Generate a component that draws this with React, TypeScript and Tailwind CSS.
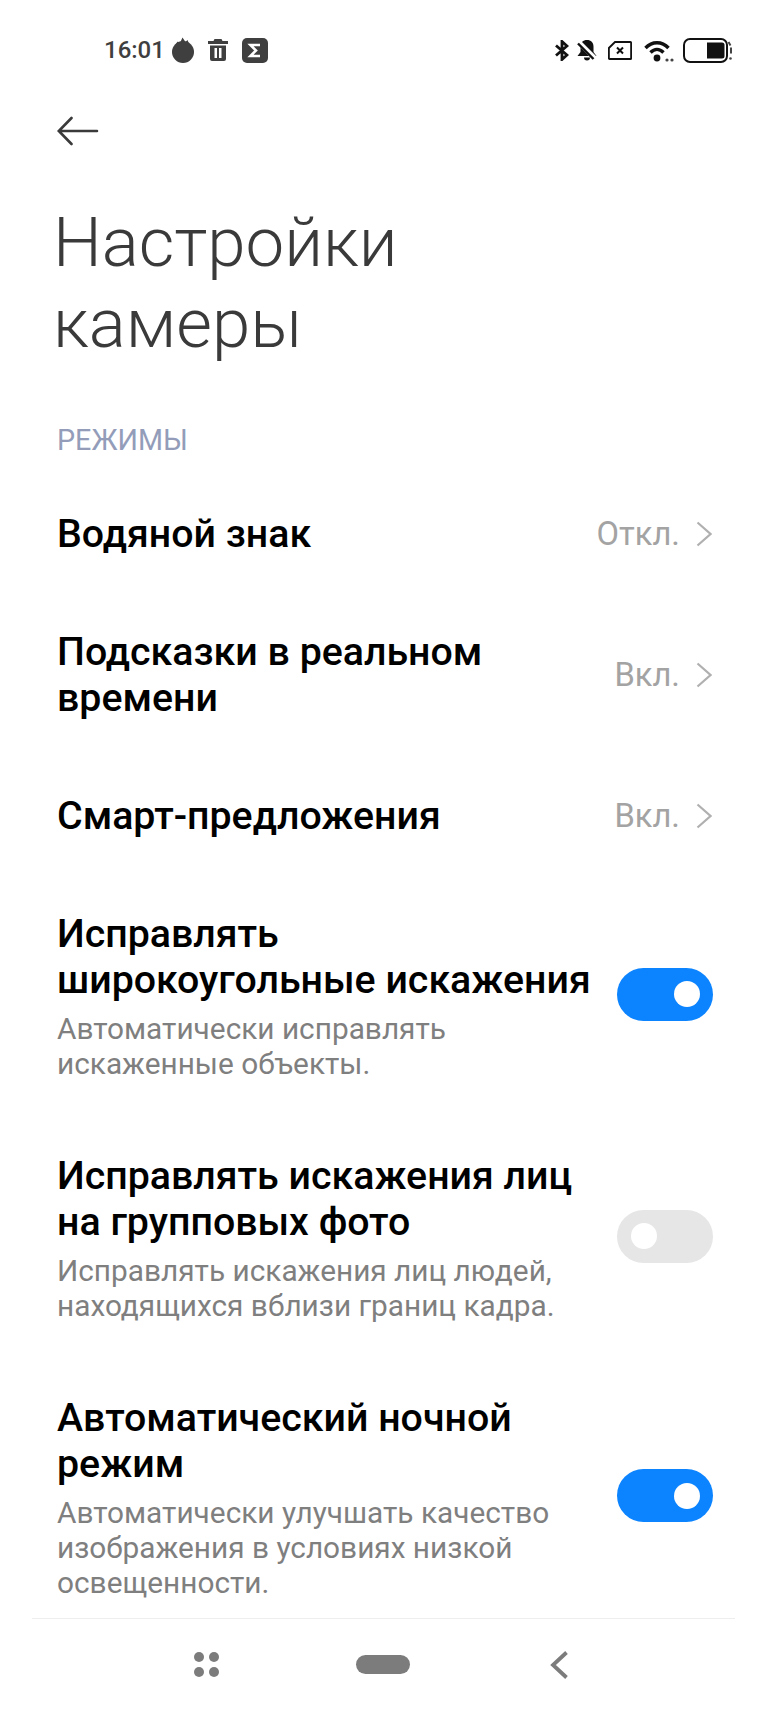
import React from "react";

const Fire = () => (
  <svg width="22" height="26" viewBox="0 0 22 26" fill="#3f3f3f">
    <circle cx="11" cy="15" r="11" />
    <path d="M3 9 5.500 4.500 7.500 7 10.500 .5 13.500 5 15.500 3 18 9Z" />
  </svg>
);

const Trash = () => (
  <svg width="20" height="22" viewBox="0 0 20 22">
    <path fill="#3f3f3f" d="M6.500 0h7l1 2H20v3H0V2h5.500ZM2 6.500h16V20a2 2 0 0 1-2 2H4a2 2 0 0 1-2-2Z" />
    <rect x="6.500" y="9" width="2.500" height="10" fill="#fff" />
    <rect x="11" y="9" width="2.500" height="10" fill="#fff" />
  </svg>
);

const SigmaBadge = () => (
  <svg width="26" height="25" viewBox="0 0 26 25">
    <rect width="26" height="25" rx="5" fill="#3f3f3f" />
    <path d="M18 7H8.500L14 12.500 8.500 18H18" fill="none" stroke="#fff" strokeWidth="2.600" />
  </svg>
);

const Bluetooth = () => (
  <svg width="14" height="21" viewBox="0 0 14 21" fill="none" stroke="#111" strokeWidth="2.800">
    <path d="M1 5.500 12 15 7 19.500V1.500L12 6 1 15.500" />
  </svg>
);

const MutedBell = () => (
  <svg width="20" height="21" viewBox="0 0 20 21">
    <path fill="#111" d="M10 0c4 0 6.500 2.500 6.500 6.500V12l3 4H.5l3-4V6.500C3.500 2.500 6 0 10 0ZM7 17.500h6a3 3 0 0 1-6 0Z" />
    <path d="M1 1.500 18.500 19" stroke="#fff" strokeWidth="5" />
    <path d="M1 3.500 16.500 19" stroke="#111" strokeWidth="2.400" />
  </svg>
);

const NoSim = () => (
  <svg width="24" height="19" viewBox="0 0 24 19" fill="none" stroke="#111">
    <path strokeWidth="1.800" d="M7 1h15.500a.6.6 0 0 1 .6.6v15.800a.6.6 0 0 1-.6.6H1.500a.6.6 0 0 1-.6-.6V7Z" />
    <path strokeWidth="2" d="m9 6.500 6 6M15 6.500l-6 6" />
  </svg>
);

const Wifi = () => (
  <svg width="30" height="23" viewBox="0 0 30 23" fill="none" stroke="#111" strokeWidth="3.400">
    <path d="M1.500 9C8 2 18 2 24.500 9" />
    <path d="M6.500 13.500c4-4 9-4 13 0" />
    <circle cx="13" cy="19" r="3.400" fill="#111" stroke="none" />
    <circle cx="23" cy="21" r="1.600" fill="#444" stroke="none" />
    <circle cx="28" cy="21" r="1.600" fill="#444" stroke="none" />
  </svg>
);

const Battery = () => (
  <svg width="50" height="25" viewBox="0 0 50 25" fill="none">
    <rect x="1" y="1" width="43" height="23" rx="6" stroke="#111" strokeWidth="2" />
    <path fill="#111" d="M24 4.500h15a2.500 2.500 0 0 1 2.500 2.500v11a2.500 2.500 0 0 1-2.500 2.500H24Z" />
    <path stroke="#444" strokeWidth="2" d="m45.500 4 2 3.500M48 9.500v6" />
    <circle cx="47.500" cy="20.500" r="1.300" fill="#444" />
  </svg>
);

const Chevron = () => (
  <svg width="16" height="26" viewBox="0 0 16 26" fill="none" stroke="#b0b0b0" strokeWidth="2.200">
    <path d="m1.500 1.500 13 11.500-13 11.500" />
  </svg>
);

function Toggle({ on }: { on: boolean }) {
  return (
    <div
      className={
        on
          ? "flex h-[53px] w-[96px] shrink-0 items-center justify-end rounded-full bg-[#0d84ff] pr-[13px] mb-1"
          : "flex h-[53px] w-[96px] shrink-0 items-center justify-start rounded-full bg-[#e6e6e6] pl-[14px] mb-1"
      }
    >
      <div className="h-[26px] w-[26px] rounded-full bg-white" />
    </div>
  );
}

function ValueRow({ title, value }: { title: React.ReactNode; value: string }) {
  return (
    <div className="flex items-center justify-between py-9">
      <div className="text-[39.3px] leading-[46px] font-medium text-black">{title}</div>
      <div className="flex items-center gap-[16px] pr-[1px]">
        <span className="text-[32.700px] leading-[46px] text-[#a3a3a3]">{value}</span>
        <Chevron />
      </div>
    </div>
  );
}

function ToggleRow({ title, hint, on }: { title: React.ReactNode; hint: React.ReactNode; on: boolean }) {
  return (
    <div className="flex items-center justify-between py-9">
      <div className="w-[540px] shrink-0">
        <div className="text-[39.3px] leading-[46px] font-medium text-black">{title}</div>
        <div className="mt-2 text-[29.800px] leading-[35px] text-[#7f7f7f]">{hint}</div>
      </div>
      <Toggle on={on} />
    </div>
  );
}

export default function App() {
  return (
    <div className="flex h-[1711px] w-[770px] flex-col overflow-hidden bg-white font-['Roboto',sans-serif]">
      {/* status bar */}
      <div className="flex h-[100px] shrink-0 items-center justify-between pr-[37px] pl-[104px]">
        <div className="flex items-center">
          <span className="text-[24px] font-medium text-[#3f3f3f]">16:01</span>
          <div className="ml-[7px] flex items-center gap-[14px]">
            <Fire />
            <Trash />
            <SigmaBadge />
          </div>
        </div>
        <div className="flex items-center">
          <Bluetooth />
          <div className="ml-[8px]"><MutedBell /></div>
          <div className="ml-[11px]"><NoSim /></div>
          <div className="ml-[12px]"><Wifi /></div>
          <div className="ml-[9px]"><Battery /></div>
        </div>
      </div>

      {/* scrolling settings list */}
      <div className="min-h-0 flex-1 overflow-hidden px-[57px]">
        <svg width="42" height="30" viewBox="0 0 42 30" fill="none" stroke="#3a3a3a" strokeWidth="2.600" strokeLinecap="round" className="mt-[16px]">
          <path d="M40 15H2M14.500 2 1.800 15l12.700 13" />
        </svg>
        <h1 className="mt-[56px] -ml-[4px] text-[69px] leading-[81px] font-light text-[#3a3a3a]">
          Настройки
          <br />
          камеры
        </h1>
        <div className="mt-[60px] text-[28.700px] leading-[32px] text-[#939db9]">РЕЖИМЫ</div>
        <div className="mt-[19px]">
          <ValueRow title="Водяной знак" value="Откл." />
          <ValueRow title={<>Подсказки в реальном<br />времени</>} value="Вкл." />
          <ValueRow title="Смарт-предложения" value="Вкл." />
          <ToggleRow
            title={<>Исправлять<br />широкоугольные искажения</>}
            hint={<>Автоматически исправлять<br />искаженные объекты.</>}
            on
          />
          <ToggleRow
            title={<>Исправлять искажения лиц<br />на групповых фото</>}
            hint={<>Исправлять искажения лиц людей,<br />находящихся вблизи границ кадра.</>}
            on={false}
          />
          <ToggleRow
            title={<>Автоматический ночной<br />режим</>}
            hint={<>Автоматически улучшать качество<br />изображения в условиях низкой<br />освещенности.</>}
            on
          />
        </div>
      </div>

      {/* navigation bar */}
      <div className="relative mr-[35px] ml-[32px] h-[93px] shrink-0 border-t border-[#eeeeee]">
        <div className="absolute top-[33px] left-[162px] grid grid-cols-2 gap-[5px]">
          <span className="h-[10px] w-[10px] rounded-full bg-[#7c7c7c]" />
          <span className="h-[10px] w-[10px] rounded-full bg-[#7c7c7c]" />
          <span className="h-[10px] w-[10px] rounded-full bg-[#7c7c7c]" />
          <span className="h-[10px] w-[10px] rounded-full bg-[#7c7c7c]" />
        </div>
        <div className="absolute top-[36px] left-[324px] h-[19px] w-[54px] rounded-full bg-[#7c7c7c]" />
        <svg width="18" height="28" viewBox="0 0 18 28" fill="none" stroke="#7c7c7c" strokeWidth="3.800" className="absolute top-[32px] left-[518px]">
          <path d="M16.500 1.500 3 14 16.500 26.500" />
        </svg>
      </div>
    </div>
  );
}
